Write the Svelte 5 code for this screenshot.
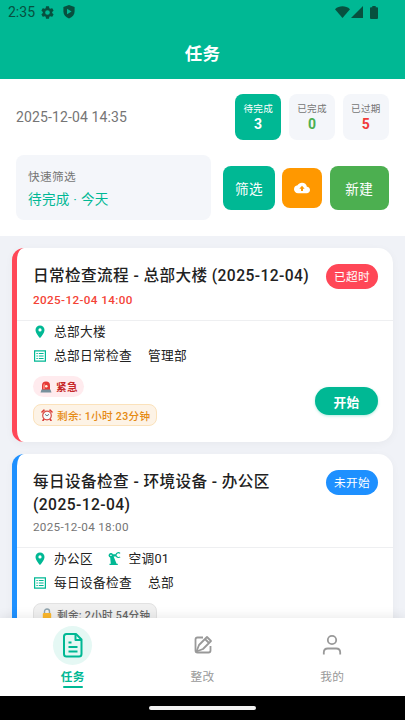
<script>
    const stats = [
        { label: "待完成", value: 3, kind: "active" },
        { label: "已完成", value: 0, kind: "done" },
        { label: "已过期", value: 5, kind: "expired" },
    ];

    const tasks = [
        {
            title: "日常检查流程 - 总部大楼 (2025-12-04)",
            time: "2025-12-04 14:00",
            status: "已超时",
            kind: "overdue",
            place: "总部大楼",
            template: "总部日常检查",
            department: "管理部",
            urgent: true,
            remaining: "剩余: 1小时 23分钟",
        },
        {
            title: "每日设备检查 - 环境设备 - 办公区 (2025-12-04)",
            time: "2025-12-04 18:00",
            status: "未开始",
            kind: "waiting",
            place: "办公区",
            device: "空调01",
            template: "每日设备检查",
            department: "总部",
            remaining: "剩余: 2小时 54分钟",
        },
    ];

    const tabs = [
        { id: "tasks", label: "任务" },
        { id: "fixes", label: "整改" },
        { id: "mine", label: "我的" },
    ];

    let current = "tasks";
</script>

<div class="screen">
    <header>
        <div class="status-bar">
            <span class="clock">2:35</span>
            <svg class="gear" width="13" height="13" viewBox="2 2 20 20">
                <path
                    d="M19.14 12.94c.04-.3.06-.61.06-.94s-.02-.64-.07-.94l2.03-1.58a.49.49 0 0 0 .12-.61l-1.92-3.32a.49.49 0 0 0-.59-.22l-2.39.96a7 7 0 0 0-1.62-.94l-.36-2.54A.48.48 0 0 0 13.92 2.4h-3.84a.48.48 0 0 0-.48.41l-.36 2.54a7 7 0 0 0-1.62.94l-2.39-.96a.49.49 0 0 0-.59.22L2.72 8.87a.48.48 0 0 0 .12.61l2.03 1.58a7 7 0 0 0 0 1.88l-2.03 1.58a.49.49 0 0 0-.12.61l1.92 3.32c.12.22.37.29.59.22l2.39-.96c.5.38 1.03.7 1.62.94l.36 2.54c.05.24.24.41.48.41h3.84c.24 0 .44-.17.48-.41l.36-2.54a7 7 0 0 0 1.62-.94l2.39.96c.22.08.47 0 .59-.22l1.92-3.32a.48.48 0 0 0-.12-.61zM12 15.6a3.6 3.6 0 1 1 0-7.2 3.6 3.6 0 0 1 0 7.2z"
                />
            </svg>
            <svg class="shield" width="12" height="14" viewBox="0 0 12 14">
                <path
                    fill-rule="evenodd"
                    d="M6 0 11.6 2v4.6c0 3.2-2.2 5.8-5.6 7-3.4-1.2-5.6-3.8-5.6-7V2zM4 3.8v5.4l4.6-2.7z"
                />
            </svg>
            <svg class="wifi" width="15" height="12" viewBox="0 0 15 12">
                <path d="M0 3.2C4.3-.6 10.7-.6 15 3.2L7.5 12z" />
            </svg>
            <svg width="12" height="12" viewBox="0 0 12 12">
                <path d="M12 0v12H0z" />
            </svg>
            <svg class="battery" width="8" height="13" viewBox="0 0 8 13">
                <path d="M2.3 0h3.4v1.3H7q1 0 1 1V12q0 1-1 1H1q-1 0-1-1V2.3q0-1 1-1h1.3z" />
            </svg>
        </div>
        <h1>任务</h1>
    </header>

    <section class="panel">
        <div class="summary">
            <span class="now">2025-12-04 14:35</span>
            <div class="stats">
                {#each stats as stat}
                    <div class="stat {stat.kind}">
                        <span>{stat.label}</span>
                        <b>{stat.value}</b>
                    </div>
                {/each}
            </div>
        </div>
        <div class="filters">
            <div class="quick">
                <span>快速筛选</span>
                <strong>待完成 · 今天</strong>
            </div>
            <button class="filter">筛选</button>
            <button class="upload" aria-label="上传">
                <svg width="16" height="12" viewBox="0 4 24 16">
                    <path
                        fill-rule="evenodd"
                        d="M19.35 10.04A7.49 7.49 0 0 0 12 4C9.11 4 6.6 5.64 5.35 8.04A5.994 5.994 0 0 0 0 14c0 3.31 2.69 6 6 6h13c2.76 0 5-2.24 5-5 0-2.64-2.05-4.78-4.65-4.96zM13.5 13v3.5h-3V13H8l4-4.2 4 4.2z"
                    />
                </svg>
            </button>
            <button class="create">新建</button>
        </div>
    </section>

    <main>
        {#each tasks as task}
            <article class={task.kind}>
                <div class="card-head">
                    <div class="heading">
                        <h2>{task.title}</h2>
                        <time>{task.time}</time>
                    </div>
                    <span class="badge">{task.status}</span>
                </div>
                <div class="card-body">
                    <div class="meta">
                        <svg width="14" height="14" viewBox="0 0 14 14">
                            <path
                                fill-rule="evenodd"
                                d="M7 .4a4.5 4.5 0 0 0-4.5 4.5C2.5 8.2 7 13 7 13s4.5-4.8 4.5-8.1A4.5 4.5 0 0 0 7 .4zm0 6.1a1.6 1.6 0 1 1 0-3.2 1.6 1.6 0 0 1 0 3.2z"
                            />
                        </svg>
                        <span>{task.place}</span>
                        {#if task.device}
                            <svg class="second" width="14" height="14" viewBox="0 0 14 14">
                                <path
                                    fill-rule="evenodd"
                                    d="M1.5 13v-1.3h1.3L2.2 5.6A2.3 2.3 0 1 1 4.9 2.3h2.6a3 3 0 0 1 5-1.3l-.8.8a1.8 1.8 0 1 0 0 2.6l.8.8a3 3 0 0 1-4.7-.8H5.6l3 7.3h1.2V13zM2.3 2.8v1.3h1.3V2.8z"
                                />
                            </svg>
                            <span>{task.device}</span>
                        {/if}
                    </div>
                    <div class="meta">
                        <svg width="14" height="14" viewBox="0 0 14 14">
                            <path
                                fill-rule="evenodd"
                                d="M1 1.3h12v11.4H1zm1.2 1.2v9h9.600v-9zM3.400 3.900h1.400v1.200H3.400zm2.400 0h4.800v1.200H5.800zM3.400 6.400h1.400v1.200H3.400zm2.400 0h4.800v1.200H5.800zM3.400 8.900h1.400v1.200H3.400zm2.400 0h4.800v1.200H5.800z"
                            />
                        </svg>
                        <span>{task.template}</span>
                        <span class="second">{task.department}</span>
                    </div>
                    <div class="card-foot">
                        <div class="tags">
                            {#if task.urgent}
                                <span class="urgent">
                                    <svg width="12" height="12" viewBox="0 0 12 12">
                                        <path fill="#e53935" d="M2 9V4.5a4 4 0 0 1 8 0V9z" />
                                        <path fill="#ff8a80" d="M3.2 8V4.7q0-2 1.5-2.5V8z" />
                                        <circle cx="6.3" cy="5.3" r="1.3" fill="#fff3e0" />
                                        <path fill="#78909c" d="M1.5 8.5h9l1 3H.5z" />
                                    </svg>
                                    紧急
                                </span>
                            {/if}
                            <span class="remaining">
                                {#if task.urgent}
                                    <svg width="12" height="12" viewBox="0 0 12 12">
                                        <path
                                            d="M1 3 3 1.2M9 1.2 11 3M3 10l-1 1.5M9 10l1 1.5"
                                            stroke="#d93a35"
                                            stroke-width="1.6"
                                            stroke-linecap="round"
                                        />
                                        <circle
                                            cx="6"
                                            cy="6.5"
                                            r="4.3"
                                            fill="#f7fafb"
                                            stroke="#d94b45"
                                            stroke-width="1.2"
                                        />
                                        <path
                                            d="m4 5.3 2 1.5 2-1.5"
                                            fill="none"
                                            stroke="#455a64"
                                            stroke-width=".8"
                                        />
                                    </svg>
                                {:else}
                                    <svg width="12" height="12" viewBox="0 0 12 12">
                                        <path
                                            d="M3.5 6V3.5a2.5 2.5 0 0 1 5 0V6"
                                            fill="none"
                                            stroke="#8fa3ad"
                                            stroke-width="1.4"
                                        />
                                        <rect x="1.8" y="5" width="8.4" height="6.5" rx="1" fill="#fbb72c" />
                                    </svg>
                                {/if}
                                {task.remaining}
                            </span>
                        </div>
                        {#if task.urgent}
                            <button class="start">开始</button>
                        {/if}
                    </div>
                </div>
            </article>
        {/each}
    </main>

    <nav>
        {#each tabs as tab}
            <button class:current={current === tab.id} on:click={() => (current = tab.id)}>
                <span class="icon">
                    {#if tab.id === "tasks"}
                        <svg width="26" height="28" viewBox="0 0 26 28" stroke-width="2">
                            <path d="M6.5 3H16l5.500 5.500V23q0 2.500-2.500 2.500H6.500Q4 25.500 4 23V5.500Q4 3 6.500 3z" />
                            <path d="M15.500 3v6h6M8.500 11.500h3M8.500 16h9M8.500 20.500h9" />
                        </svg>
                    {:else if tab.id === "fixes"}
                        <svg width="24" height="24" viewBox="0 0 24 24" stroke-width="1.8">
                            <path d="M12 4.5H6.5q-2 0-2 2v11q0 2 2 2h11q2 0 2-2V13" />
                            <path d="M5.500 18.500 8 12l8-8 4 4-8 8zM14 6l4 4" />
                        </svg>
                    {:else}
                        <svg width="24" height="24" viewBox="0 0 24 24" stroke-width="1.8">
                            <circle cx="12" cy="7" r="4.2" />
                            <path d="M3.800 21.500v-2q0-4 4-4h8.400q4 0 4 4v2" />
                        </svg>
                    {/if}
                </span>
                <span class="tab-label">{tab.label}</span>
            </button>
        {/each}
    </nav>
    <div class="home-bar"><i></i></div>
</div>

<style>
    :global(body) {
        margin: 0;
    }

    .screen {
        height: 720px;
        display: flex;
        flex-direction: column;
        overflow: hidden;
        background: #f0f2f7;
        font-family: Roboto, "Noto Sans CJK SC", sans-serif;
        letter-spacing: 0.3px;
        color: #212121;
    }

    button {
        border: 0;
        padding: 0;
        font: inherit;
        letter-spacing: inherit;
        color: #fff;
    }

    svg {
        display: block;
        flex: none;
        fill: currentColor;
    }

    header {
        height: 79px;
        flex: none;
        background: #00b894;
    }

    .status-bar {
        height: 24px;
        display: flex;
        align-items: center;
        padding: 0 27px 0 8px;
        color: #07503f;
    }

    .clock {
        width: 33px;
        font-size: 14px;
        letter-spacing: 0;
    }

    .shield {
        margin-left: 9px;
    }

    .wifi {
        margin: 0 1px 0 auto;
    }

    .battery {
        margin-left: 7px;
    }

    h1 {
        margin: 0;
        line-height: 60px;
        font-size: 17.5px;
        font-weight: 700;
        text-align: center;
        color: #fff;
    }

    .panel {
        height: 157px;
        flex: none;
        box-sizing: border-box;
        padding: 15px 16px;
        background: #fff;
    }

    .summary {
        display: flex;
        justify-content: space-between;
        align-items: center;
    }

    .now {
        font-size: 14px;
        letter-spacing: 0.12px;
        color: #757575;
    }

    .stats {
        display: flex;
        gap: 7.5px;
    }

    .stat {
        width: 46.3px;
        height: 46px;
        box-sizing: border-box;
        padding-top: 7px;
        display: flex;
        flex-direction: column;
        align-items: center;
        border-radius: 8px;
        background: #f4f6fa;
        color: #757575;
        font-size: 9.6px;
        line-height: 15px;
    }

    .stat b {
        font-size: 14px;
        line-height: 17px;
    }

    .stat.active {
        background: #00b894;
        color: #fff;
    }

    .done b {
        color: #4caf50;
    }

    .expired b {
        color: #f03a3a;
    }

    .filters {
        display: flex;
        align-items: center;
        margin-top: 15px;
    }

    .quick {
        width: 195px;
        height: 65px;
        box-sizing: border-box;
        padding: 11px 12px;
        margin-right: 12px;
        border-radius: 8px;
        background: #f4f6fa;
        font-size: 11.7px;
        color: #757575;
    }

    .quick span,
    .quick strong {
        display: block;
        line-height: 22px;
    }

    .quick strong {
        font-size: 13.6px;
        font-weight: 400;
        color: #00b894;
    }

    .filter,
    .create {
        width: 52px;
        height: 44px;
        border-radius: 8px;
        background: #00b894;
        font-size: 13.6px;
    }

    .upload {
        width: 40px;
        height: 40px;
        margin: 0 7.5px 0 7px;
        display: grid;
        place-items: center;
        border-radius: 8px;
        background: #ff9800;
    }

    .create {
        width: 59.5px;
        background: #4caf50;
    }

    main {
        flex: 1;
        min-height: 0;
        overflow: hidden;
        padding: 12px 12px 0;
    }

    article {
        height: 194px;
        box-sizing: border-box;
        margin-bottom: 12px;
        border-left: 5px solid #ff4757;
        border-radius: 12px 15px 15px 12px;
        background: #fff;
        box-shadow: 0 2px 8px rgba(0, 0, 0, 0.04);
    }

    article.waiting {
        height: 220px;
        border-color: #1e90ff;
    }

    .card-head {
        height: 73px;
        box-sizing: border-box;
        display: flex;
        justify-content: space-between;
        align-items: flex-start;
        padding: 16px 15px 0 16px;
        border-bottom: 1px solid #eeeff1;
    }

    .waiting .card-head {
        height: 94px;
    }

    .heading {
        width: 285px;
    }

    h2 {
        margin: 0;
        padding-top: 1px;
        font-size: 15.6px;
        line-height: 23px;
        font-weight: 500;
        letter-spacing: 0.42px;
    }

    time {
        display: block;
        margin-top: 3px;
        font-size: 11.7px;
        line-height: 18px;
        letter-spacing: 0.38px;
        color: #757575;
    }

    .overdue time {
        font-weight: 500;
        color: #f44336;
    }

    .waiting time {
        margin-top: 1px;
        letter-spacing: 0.3px;
    }

    .badge {
        width: 52px;
        height: 25px;
        flex: none;
        border-radius: 13px;
        background: #ff4757;
        color: #fff;
        font-size: 11.7px;
        line-height: 26px;
        text-align: center;
    }

    .waiting .badge {
        background: #1e90ff;
    }

    .card-body {
        padding: 0 15px 0 16px;
    }

    .meta {
        height: 25px;
        display: flex;
        align-items: center;
        font-size: 12.7px;
        line-height: 20px;
    }

    .meta:first-child {
        height: 22px;
    }

    .meta svg {
        margin-right: 7px;
        color: #00b894;
    }

    .meta .second {
        margin-left: 16px;
    }

    .meta svg.second {
        margin: 0 6px 0 15.5px;
    }

    .card-foot {
        display: flex;
        justify-content: space-between;
        padding-top: 8px;
    }

    .tags {
        display: flex;
        flex-direction: column;
        align-items: flex-start;
        gap: 7px;
    }

    .tags span {
        height: 21px;
        box-sizing: border-box;
        display: flex;
        align-items: center;
        gap: 4px;
        padding: 0 6px 0 7px;
        border-radius: 11px;
        font-size: 10.6px;
        font-weight: 500;
    }

    .tags .urgent {
        background: #ffebee;
        color: #c62828;
        font-weight: 700;
    }

    .tags .remaining {
        height: 22px;
        border: 1px solid #fbe2bb;
        border-radius: 8px;
        background: #fdf3e6;
        color: #e58a13;
    }

    .waiting .tags .remaining {
        border-color: #e2e2e2;
        background: #f0f0f0;
        color: #666;
    }

    .start {
        width: 63px;
        height: 28px;
        margin-top: 11px;
        border-radius: 14px;
        background: #00b894;
        font-size: 12.7px;
        font-weight: 700;
        box-shadow: 0 1px 3px rgba(0, 184, 148, 0.3);
    }

    nav {
        height: 78px;
        flex: none;
        display: flex;
        justify-content: space-around;
        padding: 0 8px;
        background: #fff;
        box-shadow: 0 -2px 10px rgba(0, 0, 0, 0.08);
        z-index: 1;
    }

    nav button {
        flex: 1;
        padding-top: 7.5px;
        display: flex;
        flex-direction: column;
        align-items: center;
        background: none;
        color: #999;
        font-size: 11.7px;
    }

    .icon {
        width: 39px;
        height: 39px;
        display: grid;
        place-items: center;
        border-radius: 50%;
    }

    .icon svg {
        fill: none;
        stroke: currentColor;
        stroke-linejoin: round;
    }

    .tab-label {
        margin-top: 3px;
        line-height: 18px;
    }

    nav .current {
        color: #00b894;
        font-weight: 700;
    }

    .current .icon {
        background: #e5f8f4;
    }

    .current .tab-label::after {
        content: "";
        display: block;
        width: 20px;
        height: 2px;
        margin: 0.5px auto 0;
        border-radius: 1px;
        background: #00b894;
    }

    .home-bar {
        height: 24px;
        flex: none;
        display: grid;
        place-items: center;
        background: #000;
    }

    .home-bar i {
        width: 107px;
        height: 4px;
        border-radius: 2px;
        background: #f2f2f2;
    }
</style>
